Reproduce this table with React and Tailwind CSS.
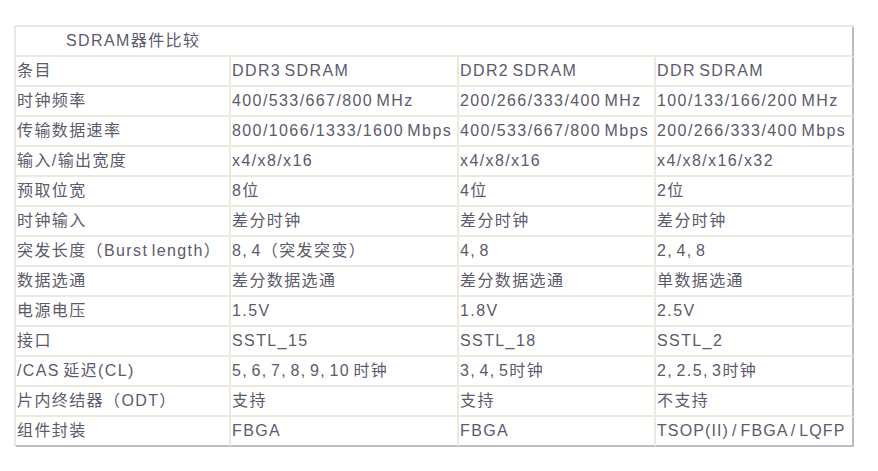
import React from 'react';

const rows = [
    ['条目', 'DDR3 SDRAM', 'DDR2 SDRAM', 'DDR SDRAM'],
    ['时钟频率', '400/533/667/800 MHz', '200/266/333/400 MHz', '100/133/166/200 MHz'],
    ['传输数据速率', '800/1066/1333/1600 Mbps', '400/533/667/800 Mbps', '200/266/333/400 Mbps'],
    ['输入/输出宽度', 'x4/x8/x16', 'x4/x8/x16', 'x4/x8/x16/x32'],
    ['预取位宽', '8位', '4位', '2位'],
    ['时钟输入', '差分时钟', '差分时钟', '差分时钟'],
    ['突发长度（Burst length）', '8, 4（突发突变）', '4, 8', '2, 4, 8'],
    ['数据选通', '差分数据选通', '差分数据选通', '单数据选通'],
    ['电源电压', '1.5V', '1.8V', '2.5V'],
    ['接口', 'SSTL_15', 'SSTL_18', 'SSTL_2'],
    ['/CAS 延迟(CL)', '5, 6, 7, 8, 9, 10 时钟', '3, 4, 5时钟', '2, 2.5, 3时钟'],
    ['片内终结器（ODT）', '支持', '支持', '不支持'],
    ['组件封装', 'FBGA', 'FBGA', 'TSOP(II) / FBGA / LQFP'],
];

const widths = ['w-[215px]', 'w-[228px]', 'w-[197px]', 'w-[198px]'];

export default function App() {
    return (
        <div className="min-h-[471px] w-[878px] bg-white pt-[25px] pl-[14px] font-['Liberation_Sans','Noto_Sans_CJK_SC',sans-serif] text-[16px] tracking-[1.4px] [word-spacing:-2.5px] text-[#5b5b6a]">
            <table className="table-fixed w-[838px] border-separate border-spacing-0 border-l-2 border-t-2 border-[#ece9de]">
                <colgroup>
                    {widths.map((w, i) => <col key={i} className={w} />)}
                </colgroup>
                <tbody>
                    <tr className="h-[30px]">
                        <td colSpan={4} className="pl-[50px] align-middle border-b-2 border-r-2 border-b-[#ece9de] border-r-[#bdbdbd] whitespace-nowrap">
                            SDRAM器件比较
                        </td>
                    </tr>
                    {rows.map((r, ri) => (
                        <tr key={ri} className="h-[30px]">
                            {r.map((c, ci) => (
                                <td
                                    key={ci}
                                    className={
                                        'pl-[1px] align-middle whitespace-nowrap border-b-2 border-r-2 ' +
                                        (ci === 3 ? 'border-r-[#bdbdbd] ' : 'border-r-[#ece9de] ') +
                                        (ri === rows.length - 1 ? 'border-b-[#bdbdbd] ' : 'border-b-[#ece9de] ') +
                                        (c.length > 20 && ci === 3 && ri === rows.length - 1 ? 'tracking-[1.1px]' : '')
                                    }
                                >
                                    {c}
                                </td>
                            ))}
                        </tr>
                    ))}
                </tbody>
            </table>
        </div>
    );
}
